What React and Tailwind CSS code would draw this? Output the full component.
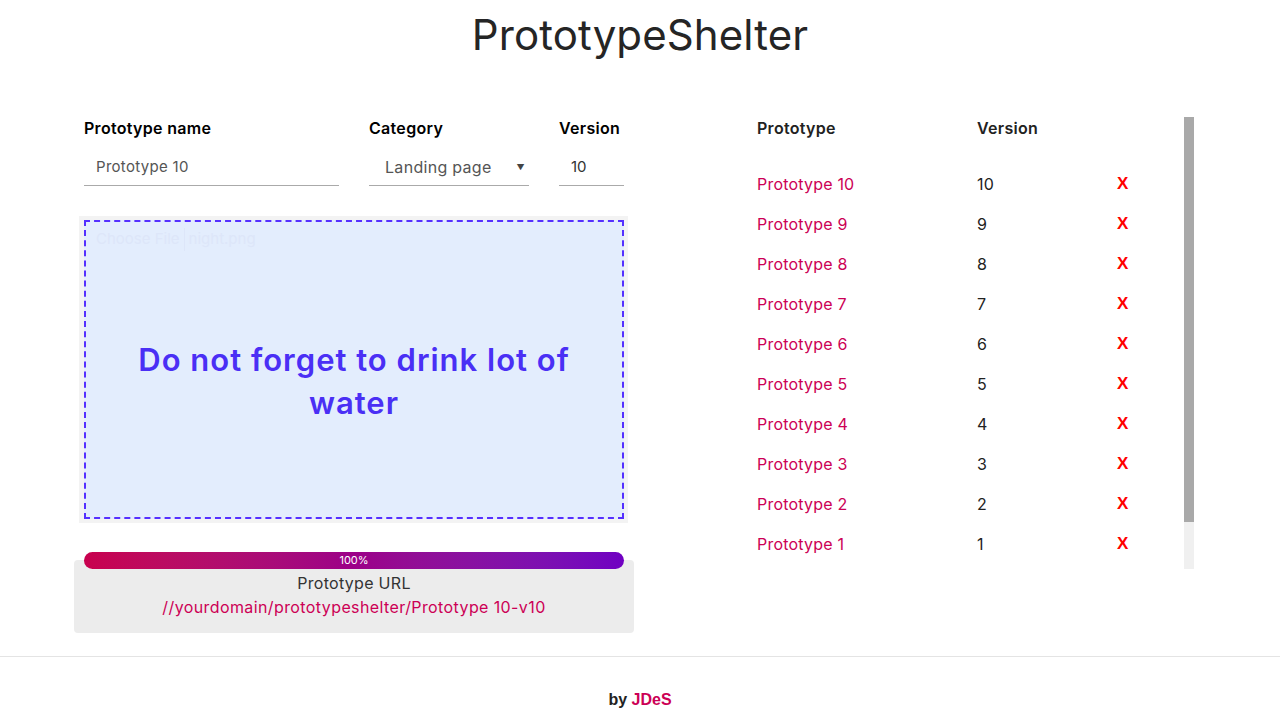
import React from 'react'

const ROWS = [10, 9, 8, 7, 6, 5, 4, 3, 2, 1]

function Field({ label, width, children }) {
  return (
    <div className={`flex flex-col ${width}`}>
      <label className="text-[16px] font-semibold leading-[22px] text-black tracking-[0.3px]">{label}</label>
      {children}
    </div>
  )
}

export default function App() {
  return (
    <div className="min-h-screen bg-white text-[#222] font-['Inter','Noto_Sans',sans-serif]">
      {/* titre */}
      <header className="h-[70px] flex items-center justify-center">
        <h1 className="text-[42px] leading-none font-normal text-[#252525] tracking-[0.1px]">PrototypeShelter</h1>
      </header>

      <main className="flex pt-[47px]">
        {/* formulaire */}
        <section className="ml-[74px] w-[560px] flex flex-col">
          <div className="flex gap-[30px] px-[10px]">
            <Field label="Prototype name" width="w-[255px]">
              <div className="h-[47px] flex items-center px-3 pt-[10px] border-b border-[#aaa] text-[15px] text-[#555] tracking-[0.3px]">
                Prototype 10
              </div>
            </Field>
            <Field label="Category" width="w-[160px]">
              <div className="h-[47px] flex items-center justify-between pl-4 pr-[4px] pt-[10px] border-b border-[#aaa] text-[16px] text-[#555] tracking-[0.3px]">
                <span>Landing page</span>
                <span className="text-[8px] text-[#444]">▼</span>
              </div>
            </Field>
            <Field label="Version" width="w-[65px]">
              <div className="h-[47px] flex items-center px-3 pt-[10px] border-b border-[#aaa] text-[15px] text-[#333]">
                10
              </div>
            </Field>
          </div>

          {/* zone de dépôt */}
          <div className="mt-[30px] ml-[5px] w-[549px] h-[307px] bg-[#f3f3f3] pl-[5px] pr-[4px] py-[4px]">
            <div className="relative h-full border-2 border-dashed border-[#5530ff] bg-[#e3edfd] flex items-center justify-center">
              <div className="absolute left-[10px] top-[6px] flex items-center text-[15px] text-[#dde6f9]">
                <span className="pr-1 border-r border-[#dde6f9]">Choose File</span>
                <span className="pl-1">night.png</span>
              </div>
              <p className="text-center text-[31px] leading-[43px] font-semibold text-[#4a2ff5] tracking-[1px] px-[30px] mt-[22px]">
                Do not forget to drink lot of water
              </p>
            </div>
          </div>

          {/* progression + url */}
          <div className="mt-[29px] mx-[10px] h-[17px] rounded-full bg-gradient-to-r from-[#c8004e] via-[#9c0088] to-[#7000c2] relative z-10 flex items-center justify-center">
            <span className="text-[11px] leading-none text-white">100%</span>
          </div>
          <div className="-mt-[9px] h-[73px] bg-[#ececec] rounded-[4px] pt-[11px] flex flex-col items-center">
            <span className="text-[16px] leading-[24px] text-[#333] tracking-[0.3px]">Prototype URL</span>
            <span className="text-[16px] leading-[24px] text-[#cc0055] tracking-[0.4px]">//yourdomain/prototypeshelter/Prototype 10-v10</span>
          </div>
        </section>

        {/* liste */}
        <section className="ml-[123px] flex">
          <div className="w-[427px]">
            <div className="flex h-[22px] items-center text-[16px] font-semibold text-[#222] tracking-[0.3px]">
              <span className="w-[220px]">Prototype</span>
              <span>Version</span>
            </div>
            <div className="mt-[25px]">
              {ROWS.map(n => (
                <div key={n} className="flex h-[40px] items-center text-[16px] tracking-[0.2px]">
                  <span className="w-[220px] text-[#cc0055]">Prototype {n}</span>
                  <span className="w-[140px] text-[#222]">{n}</span>
                  <span className="font-['Liberation_Sans',Arial,sans-serif] font-bold text-[17px] text-[#ff0000]">X</span>
                </div>
              ))}
            </div>
          </div>
          <div className="w-[10px] h-[452px] bg-[#f0f0f0] flex flex-col">
            <div className="h-[405px] bg-[#a9a9a9]" />
          </div>
        </section>
      </main>

      <footer className="mt-[23px] border-t border-[#e4e4e4] h-[65px] flex items-center justify-center pt-[22px]">
        <span className="font-['Liberation_Sans',Arial,sans-serif] font-bold text-[16px] text-[#222]">
          by <span className="text-[#cc0055]">JDeS</span>
        </span>
      </footer>
    </div>
  )
}
